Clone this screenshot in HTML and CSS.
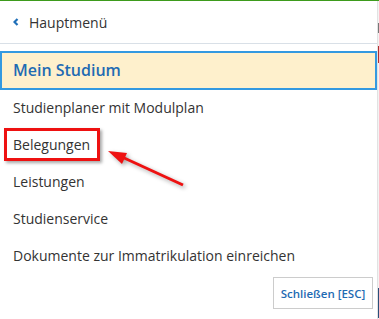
FILE: index.html
```html
<!DOCTYPE html>
<html lang="de">
<head>
    <meta charset="UTF-8">
    <meta name="viewport" content="width=device-width, initial-scale=1.0">
    <title>Hauptmenü - Mein Studium</title>
    <link rel="stylesheet" href="styles.css">
</head>
<body>
<div class="page">
    <div class="panel">
        <div class="panel-head">
            <svg class="chevron" width="6" height="8" viewBox="0 0 6 8">
                <polyline points="4.5,1 1.5,4 4.5,7" fill="none" stroke="#1f6fb8" stroke-width="2.2"/>
            </svg>
            <span>Hauptmenü</span>
        </div>

        <div class="section-title">Mein Studium</div>

        <ul class="menu">
            <li>Studienplaner mit Modulplan</li>
            <li><span class="marked">Belegungen</span></li>
            <li>Leistungen</li>
            <li>Studienservice</li>
            <li>Dokumente zur Immatrikulation einreichen</li>
        </ul>

        <div class="panel-foot">
            <button class="btn-close">Schließen [ESC]</button>
        </div>

        <!-- annotation arrow -->
        <svg class="arrow" width="200" height="200" viewBox="0 0 200 200">
            <line x1="183" y1="184" x2="122" y2="156" stroke="#ee1111" stroke-width="3"/>
            <polygon points="108,150 127,152 122,163" fill="#ee1111"/>
        </svg>
    </div>
    <div class="edge">
        <div class="edge-bit bit-a"></div>
        <div class="edge-bit bit-b"></div>
        <div class="edge-bit bit-c"></div>
    </div>
</div>
</body>
</html>
```

FILE: styles.css
```css
* {
    margin: 0;
    padding: 0;
    box-sizing: border-box;
}
body {
    font-family: 'Open Sans', 'Noto Sans', Arial, sans-serif;
    color: #333;
    background: #fff;
    width: 379px;
    height: 319px;
    overflow: hidden;
}
.page {
    display: flex;
    border-top: 1px solid #3d9b1c;
    height: 319px;
}
.panel {
    position: relative;
    width: 378px;
    height: 318px;
    border-right: 1px solid #e2e2e2;
    background: #fff;
}
.panel-head {
    display: flex;
    align-items: center;
    height: 43px;
    padding-left: 13px;
    border-bottom: 1px solid #d9e0e7;
    font-size: 14px;
}
.chevron {
    margin-right: 10px;
}
.section-title {
    margin-top: 7px;
    height: 39px;
    border: 2px solid #3399e0;
    background: #fef0cc;
    color: #1f6bb3;
    font-size: 16px;
    font-weight: 600;
    padding-left: 11px;
    line-height: 35px;
}
.menu {
    list-style: none;
    margin-top: -1px;
}
.menu li {
    font-size: 14px;
    line-height: 19px;
    padding: 9px 13px;
}
.marked {
    display: inline-block;
    margin: -7px 0 -7px -9px;
    padding: 4px 7px 4px 6px;
    border: 3px solid #ee1111;
    box-shadow: 2px 2px 3px rgba(0, 0, 0, 0.35);
}
.panel-foot {
    display: flex;
    justify-content: flex-end;
    padding-right: 4px;
    margin-top: 3px;
}
.btn-close {
    width: 100px;
    height: 32px;
    background: #fff;
    border: 1px solid #cccccc;
    color: #1f6bb3;
    font-family: 'Open Sans', 'Noto Sans', Arial, sans-serif;
    font-size: 11.5px;
    font-weight: 600;
}
.arrow {
    position: absolute;
    left: 0;
    top: 0;
    filter: drop-shadow(2px 2px 2px rgba(0, 0, 0, 0.35));
}
.edge {
    flex: 1;
    background: #f3f3f3;
    display: flex;
    flex-direction: column;
}
.edge-bit {
    width: 100%;
}
.bit-a {
    height: 10px;
    margin-top: 22px;
    background: #777;
}
.bit-b {
    height: 17px;
    margin-top: 13px;
    background: #b03030;
}
.bit-c {
    height: 30px;
    margin-top: 225px;
    background: #2a4f7a;
}
```
